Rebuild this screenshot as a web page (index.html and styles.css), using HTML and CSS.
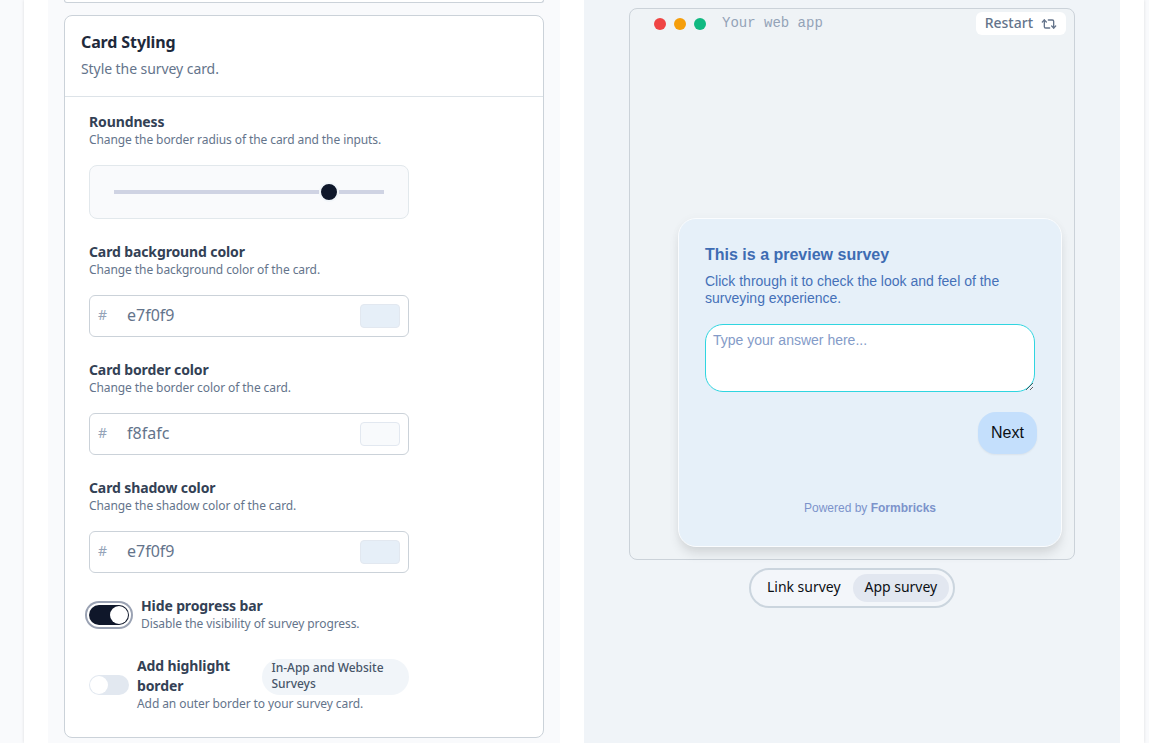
FILE: index.html
```
<!DOCTYPE html>
<html lang="en">
<head>
<meta charset="utf-8">
<title>Card Styling</title>
<link rel="stylesheet" href="styles.css">
</head>
<body>
<main class="panel">
  <section class="form-col">
    <div class="prev-card"></div>
    <div class="card">
      <header class="card-head">
        <h2>Card Styling</h2>
        <p>Style the survey card.</p>
      </header>
      <div class="card-body">
        <div class="field">
          <h3>Roundness</h3>
          <p>Change the border radius of the card and the inputs.</p>
          <div class="slider-box"><div class="track"><span class="before"></span><span class="thumb"></span><span class="after"></span></div></div>
        </div>
        <div class="field">
          <h3>Card background color</h3>
          <p>Change the background color of the card.</p>
          <div class="color-box"><span class="hash">#</span><span class="hex">e7f0f9</span><span class="swatch"></span></div>
        </div>
        <div class="field">
          <h3>Card border color</h3>
          <p>Change the border color of the card.</p>
          <div class="color-box"><span class="hash">#</span><span class="hex">f8fafc</span><span class="swatch pale"></span></div>
        </div>
        <div class="field">
          <h3>Card shadow color</h3>
          <p>Change the shadow color of the card.</p>
          <div class="color-box"><span class="hash">#</span><span class="hex">e7f0f9</span><span class="swatch"></span></div>
        </div>
        <div class="switch-row focused">
          <span class="switch on"></span>
          <div class="field">
            <h3>Hide progress bar</h3>
            <p>Disable the visibility of survey progress.</p>
          </div>
        </div>
        <div class="switch-row">
          <span class="switch"></span>
          <div class="field">
            <div class="label-row"><h3>Add highlight border</h3><span class="badge">In-App and Website Surveys</span></div>
            <p>Add an outer border to your survey card.</p>
          </div>
        </div>
      </div>
    </div>
  </section>
  <aside class="preview">
    <div class="frame">
      <div class="frame-bar">
        <span class="dot red"></span><span class="dot amber"></span><span class="dot green"></span>
        <span class="url">Your web app</span>
        <button class="restart"><span>Restart</span>
          <svg width="16" height="16" viewBox="0 0 24 24" fill="none" stroke="currentColor" stroke-width="2" stroke-linecap="round" stroke-linejoin="round"><path d="m2 9 3-3 3 3"/><path d="M13 18H7a2 2 0 0 1-2-2V6"/><path d="m22 15-3 3-3-3"/><path d="M11 6h6a2 2 0 0 1 2 2v10"/></svg>
        </button>
      </div>
      <div class="survey">
        <h4>This is a preview survey</h4>
        <p>Click through it to check the look and feel of the surveying experience.</p>
        <textarea placeholder="Type your answer here..."></textarea>
        <button class="next">Next</button>
        <div class="powered">Powered by <b>Formbricks</b></div>
      </div>
    </div>
    <div class="tabs"><span class="tab">Link survey</span><span class="tab active">App survey</span></div>
  </aside>
</main>
</body>
</html>
```
FILE: styles.css
```
* { box-sizing: border-box; margin: 0; padding: 0; }
body {
  height: 743px;
  overflow: hidden;
  padding: 0 5px 0 24px;
  background: #f9fafc;
  font-family: "Noto Sans", sans-serif;
  color: #64748b;
}
button { border: 0; }
.panel {
  display: flex;
  gap: 24px;
  height: 743px;
  padding: 0 24px;
  background: #fff;
  box-shadow: 0 0 3px rgba(0, 0, 0, .12);
}
.form-col {
  width: 512px;
  padding: 0 16px;
  background: #f9fafc;
}
.prev-card {
  height: 3px;
  border: 1px solid #cbd2d9;
  border-top: 0;
  border-radius: 0 0 8px 8px;
  background: #fff;
}
.card {
  height: 723px;
  margin-top: 12px;
  border: 1px solid #cbd2d9;
  border-radius: 8px;
  background: #fff;
}
.card-head {
  height: 81px;
  padding: 14px 16px;
  border-bottom: 1px solid #dde3e8;
}
.card-head h2 { font-size: 16px; line-height: 24px; font-weight: 700; letter-spacing: -.12px; color: #1e293b; }
.card-head p { margin-top: 5px; font-size: 14px; line-height: 20px; letter-spacing: -.07px; }
.card-body {
  display: flex;
  flex-direction: column;
  gap: 24px;
  width: 344px;
  padding: 15px 0 0 24px;
}
.field h3 { font-size: 14px; line-height: 20px; font-weight: 700; letter-spacing: -.12px; color: #334155; }
.field p { font-size: 12px; line-height: 16px; letter-spacing: -.085px; }
.slider-box {
  display: flex;
  align-items: center;
  height: 54px;
  margin: 17px 0 -1px;
  padding: 0 24px;
  border: 1px solid #e2e8ec;
  border-radius: 8px;
  background: #f9fafc;
}
.track { display: flex; align-items: center; width: 270px; }
.before { width: 205px; height: 4px; background: #cfd3e3; }
.thumb {
  width: 20px;
  height: 20px;
  border: 2px solid #f1f5f9;
  border-radius: 50%;
  background: #0f172a;
}
.after { flex: 1; height: 4px; background: #cfd3e3; }
.color-box {
  display: flex;
  align-items: center;
  height: 42px;
  margin: 17px 0 -1px;
  padding: 0 8px;
  border: 1px solid #cbd2d9;
  border-radius: 6px;
}
.hash { width: 29px; margin-top: -3px; font-size: 14px; color: #94a3b8; }
.hex { flex: 1; margin-top: -2px; font-size: 16px; line-height: 24px; }
.swatch { width: 40px; height: 24px; border: 1px solid #e2e8f0; border-radius: 4px; background: #e6eff8; }
.swatch.pale { background: #f8fafc; }
.switch-row { display: flex; align-items: center; gap: 8px; }
.switch-row.focused { gap: 12px; }
.switch-row .field { flex: 1; }
.switch {
  display: flex;
  width: 40px;
  height: 20px;
  margin-top: 2px;
  padding: 1px;
  border-radius: 10px;
  background: #e2e8f0;
}
.switch::after { content: ""; width: 18px; height: 18px; border-radius: 50%; background: #fff; }
.switch.on {
  justify-content: flex-end;
  background: #0f172a;
  box-shadow: 0 0 0 2px #fff, 0 0 0 4px #9aa2b3;
}
.label-row { display: flex; align-items: center; justify-content: space-between; }
.label-row h3 { width: 105px; }
.badge {
  width: 147px;
  margin: 3px 0 1px;
  padding: 1px 9px 3px 9.5px;
  border-radius: 18px;
  background: #f1f5f9;
  font-size: 12px;
  line-height: 16px;
  font-weight: 500;
  letter-spacing: -.02px;
  color: #475569;
}
.preview {
  display: flex;
  flex-direction: column;
  align-items: center;
  width: 536px;
  padding-top: 8px;
  background: #f0f4f8;
}
.frame {
  display: flex;
  flex-direction: column;
  width: 446px;
  height: 552px;
  border: 1px solid #cbd2d9;
  border-radius: 8px;
  background: #eff3f6;
}
.frame-bar { display: flex; align-items: center; height: 29px; padding: 0 8px 0 24px; }
.dot { width: 12px; height: 12px; margin: 1px 8px 0 0; border-radius: 50%; }
.red { background: #ef4444; }
.amber { background: #f59e0b; }
.green { background: #10b981; }
.url { margin: -1px auto 0 8px; font: 14px "Liberation Mono", monospace; color: #94a3b8; }
.restart {
  display: flex;
  align-items: center;
  gap: 8px;
  height: 23px;
  padding: 0 9px;
  border-radius: 6px;
  background: #fff;
  font: 500 14px "Noto Sans", sans-serif;
  color: #64748b;
}
.restart span { margin-top: -2px; }
.survey {
  display: flex;
  flex-direction: column;
  width: 384px;
  height: 329px;
  margin: auto 12px 12px auto;
  padding: 25px 26px 0;
  border: 1px solid #fafcfe;
  border-radius: 18px;
  background: #e6f0f9;
  box-shadow: 0 8px 12px -2px rgba(0, 0, 0, .12), 0 0 8px rgba(0, 0, 0, .03);
  font-family: "Liberation Sans", sans-serif;
}
.survey h4 { font-size: 16px; line-height: 22px; color: #3e6cb3; }
.survey p { margin-top: 7px; font-size: 14px; line-height: 17px; color: #4570b8; }
.survey textarea {
  width: 330px;
  height: 68px;
  margin-top: 17px;
  padding: 7px;
  border: 1px solid #30d5e0;
  border-radius: 18px;
  background: #fff;
  font: 14px "Liberation Sans", sans-serif;
}
.survey textarea::placeholder { color: #849bc8; }
.next {
  align-self: flex-end;
  width: 59px;
  height: 42px;
  margin: 20px -2px 0 0;
  border-radius: 18px;
  background: #c4dffc;
  box-shadow: 0 1px 2px rgba(0, 0, 0, .06);
  font: 16px "Liberation Sans", sans-serif;
  color: #0b0f14;
}
.powered { margin-top: 47px; text-align: center; font-size: 12px; line-height: 14px; color: #7c93cb; }
.tabs {
  display: flex;
  align-items: center;
  width: 206px;
  height: 40px;
  margin-top: 8px;
  padding: 0 4px;
  border: 2px solid #cbd5de;
  border-radius: 20px;
  background: #f3f6fa;
  font-size: 14px;
  line-height: 20px;
  color: #0b0f14;
}
.tab { padding: 3px 12px 5px; border-radius: 14px; white-space: nowrap; letter-spacing: -.02px; }
.tab.active { background: #e2e7f0; }
```
